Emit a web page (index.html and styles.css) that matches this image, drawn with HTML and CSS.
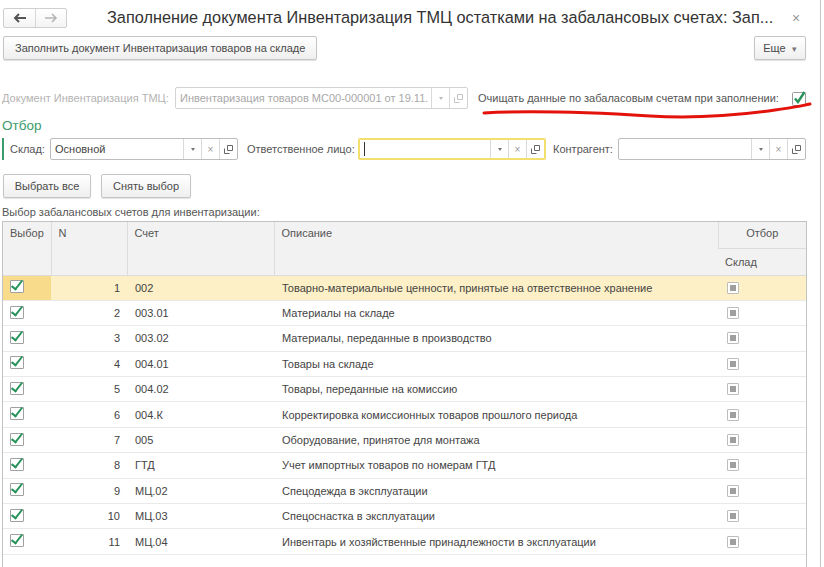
FILE: index.html
```html
<!DOCTYPE html>
<html lang="ru">
<head>
<meta charset="utf-8">
<title>Заполнение документа</title>
<link rel="stylesheet" href="styles.css">
</head>
<body>
<div class="window">
  <div class="titlebar">
    <div class="nav">
      <span class="nav-btn"><svg width="14" height="10" viewBox="0 0 14 10"><path d="M13 5H2M6 1L2 5l4 4" fill="none" stroke="#555" stroke-width="2"/></svg></span>
      <span class="nav-btn"><svg width="14" height="10" viewBox="0 0 14 10"><path d="M1 5h11M8 1l4 4-4 4" fill="none" stroke="#b5b5b5" stroke-width="1.6"/></svg></span>
    </div>
    <div class="title">Заполнение документа Инвентаризация ТМЦ остатками на забалансовых счетах: Зап...</div>
    <div class="close">×</div>
  </div>

  <div class="toolbar">
    <button class="btn">Заполнить документ Инвентаризация товаров на складе</button>
    <button class="btn btn-more">Еще <span class="caret">▾</span></button>
  </div>

  <div class="doc-row">
    <span class="label disabled doc-label">Документ Инвентаризация ТМЦ:</span>
    <div class="field field-doc">
      <span class="field-text disabled-text">Инвентаризация товаров МС00-000001 от 19.11.</span>
      <span class="fbtn"><span class="tri"></span></span>
      <span class="fbtn"><svg width="9" height="9" viewBox="0 0 9 9"><path d="M3.5 0.5h5v5h-5zM0.5 3.5v5h5" fill="none" stroke="#c4c4c4"/></svg></span>
    </div>
    <span class="label clear-label">Очищать данные по забаласовым счетам при заполнении:</span>
    <span class="check"><svg width="16" height="16" viewBox="0 0 16 16"><rect x="1.5" y="2.5" width="13" height="13" rx="1" fill="#fff" stroke="#9a9a9a"/><path d="M4 8.5l3 3.5 6.5-10" fill="none" stroke="#27935a" stroke-width="2.4"/></svg></span>
  </div>

  <div class="section-title">Отбор</div>

  <div class="filter-row">
    <span class="label lbl-sklad">Склад:</span>
    <div class="field">
      <span class="field-text">Основной</span>
      <span class="fbtn"><span class="tri"></span></span>
      <span class="fbtn x">×</span>
      <span class="fbtn"><svg width="9" height="9" viewBox="0 0 9 9"><path d="M3.5 0.5h5v5h-5zM0.5 3.5v5h5" fill="none" stroke="#666"/></svg></span>
    </div>
    <span class="label lbl-resp">Ответственное лицо:</span>
    <div class="field focused">
      <span class="field-text"><span class="cursor"></span></span>
      <span class="fbtn"><span class="tri"></span></span>
      <span class="fbtn x">×</span>
      <span class="fbtn"><svg width="9" height="9" viewBox="0 0 9 9"><path d="M3.5 0.5h5v5h-5zM0.5 3.5v5h5" fill="none" stroke="#666"/></svg></span>
    </div>
    <span class="label lbl-kontr">Контрагент:</span>
    <div class="field">
      <span class="field-text"></span>
      <span class="fbtn"><span class="tri"></span></span>
      <span class="fbtn x">×</span>
      <span class="fbtn"><svg width="9" height="9" viewBox="0 0 9 9"><path d="M3.5 0.5h5v5h-5zM0.5 3.5v5h5" fill="none" stroke="#666"/></svg></span>
    </div>
  </div>

  <div class="btn-row">
    <button class="btn btn-all">Выбрать все</button>
    <button class="btn btn-none">Снять выбор</button>
  </div>

  <div class="table-label">Выбор забалансовых счетов для инвентаризации:</div>

  <div class="grid-wrap">
    <table class="grid">
      <colgroup>
        <col class="c-sel"><col class="c-n"><col class="c-acc"><col class="c-desc"><col class="c-sklad">
      </colgroup>
      <thead>
        <tr class="h1">
          <th rowspan="2">Выбор</th>
          <th rowspan="2">N</th>
          <th rowspan="2">Счет</th>
          <th rowspan="2">Описание</th>
          <th class="center">Отбор</th>
        </tr>
        <tr class="h2">
          <th>Склад</th>
        </tr>
      </thead>
      <tbody>
        <tr class="current"><td class="sel"><span class="cb"></span></td><td class="num">1</td><td>002</td><td>Товарно-материальные ценности, принятые на ответственное хранение</td><td><span class="gcb"></span></td></tr>
        <tr><td class="sel"><span class="cb"></span></td><td class="num">2</td><td>003.01</td><td>Материалы на складе</td><td><span class="gcb"></span></td></tr>
        <tr><td class="sel"><span class="cb"></span></td><td class="num">3</td><td>003.02</td><td>Материалы, переданные в производство</td><td><span class="gcb"></span></td></tr>
        <tr><td class="sel"><span class="cb"></span></td><td class="num">4</td><td>004.01</td><td>Товары на складе</td><td><span class="gcb"></span></td></tr>
        <tr><td class="sel"><span class="cb"></span></td><td class="num">5</td><td>004.02</td><td>Товары, переданные на комиссию</td><td><span class="gcb"></span></td></tr>
        <tr><td class="sel"><span class="cb"></span></td><td class="num">6</td><td>004.К</td><td>Корректировка комиссионных товаров прошлого периода</td><td><span class="gcb"></span></td></tr>
        <tr><td class="sel"><span class="cb"></span></td><td class="num">7</td><td>005</td><td>Оборудование, принятое для монтажа</td><td><span class="gcb"></span></td></tr>
        <tr><td class="sel"><span class="cb"></span></td><td class="num">8</td><td>ГТД</td><td>Учет импортных товаров по номерам ГТД</td><td><span class="gcb"></span></td></tr>
        <tr><td class="sel"><span class="cb"></span></td><td class="num">9</td><td>МЦ.02</td><td>Спецодежда в эксплуатации</td><td><span class="gcb"></span></td></tr>
        <tr><td class="sel"><span class="cb"></span></td><td class="num">10</td><td>МЦ.03</td><td>Спецоснастка в эксплуатации</td><td><span class="gcb"></span></td></tr>
        <tr><td class="sel"><span class="cb"></span></td><td class="num">11</td><td>МЦ.04</td><td>Инвентарь и хозяйственные принадлежности в эксплуатации</td><td><span class="gcb"></span></td></tr>
      </tbody>
    </table>
  </div>

  <svg class="annotation" width="824" height="130" viewBox="0 0 824 130"><path d="M484 113 C 540 110, 600 113, 650 116 S 740 115, 775 110 S 800 106, 810 104" fill="none" stroke="#e3120b" stroke-width="3" stroke-linecap="round"/></svg>
</div>
</body>
</html>
```
FILE: styles.css
```css
* { box-sizing: border-box; }
html, body { margin: 0; padding: 0; }
body {
  font-family: "Liberation Sans", Arial, sans-serif;
  font-size: 11px;
  color: #4a4a4a;
  background: #fff;
  overflow: hidden;
}
.window {
  position: relative;
  width: 821px;
  height: 567px;
  border-right: 1px solid #c6c6c6;
  overflow: hidden;
}
.titlebar {
  display: flex;
  align-items: center;
  height: 35px;
  padding-left: 3px;
}
.nav {
  display: flex;
  height: 20px;
  border: 1px solid #cfcfcf;
  border-radius: 2px;
  background: linear-gradient(#fff, #f4f4f4);
}
.nav-btn {
  width: 31px;
  display: flex;
  align-items: center;
  justify-content: center;
}
.nav-btn + .nav-btn { border-left: 1px solid #d6d6d6; }
.title {
  flex: 1;
  min-width: 0;
  margin-left: 40px;
  font-size: 16.3px;
  color: #333;
  white-space: nowrap;
  overflow: hidden;
}
.close {
  width: 20px;
  margin-right: 14px;
  text-align: center;
  color: #9a9a9a;
  font-size: 14px;
}
.toolbar {
  display: flex;
  justify-content: space-between;
  padding: 1px 14px 0 3px;
}
.btn {
  height: 24px;
  padding: 0 11px;
  border: 1px solid #c5c5c5;
  border-radius: 2px;
  background: linear-gradient(#ffffff, #efefef);
  box-shadow: 0 1px 1px rgba(0,0,0,0.12);
  font-family: inherit;
  font-size: 11px;
  color: #4a4a4a;
  white-space: nowrap;
  cursor: default;
}
.btn-more { padding: 0; width: 52px; }
.caret { font-size: 9px; color: #777; margin-left: 3px; }
.doc-row {
  display: flex;
  align-items: center;
  height: 22px;
  margin-top: 27px;
  padding-left: 2px;
}
.label { white-space: nowrap; color: #555; }
.label.disabled { color: #b3b3b3; }
.doc-label { width: 173px; }
.field {
  display: flex;
  width: 188px;
  height: 22px;
  border: 1px solid #bdbdbd;
  border-radius: 2px;
  background: #fff;
  flex: none;
}
.field-doc { width: 293px; border-color: #d2d2d2; }
.field-text {
  flex: 1;
  min-width: 0;
  display: flex;
  align-items: center;
  padding-left: 4px;
  white-space: nowrap;
  overflow: hidden;
  color: #444;
}
.disabled-text { color: #a8a8a8; }
.fbtn {
  width: 18px;
  display: flex;
  align-items: center;
  justify-content: center;
  border-left: 1px solid #dadada;
  color: #888;
}
.fbtn.x { font-size: 10px; color: #9a9a9a; }
.tri {
  width: 0; height: 0;
  border-left: 2.5px solid transparent;
  border-right: 2.5px solid transparent;
  border-top: 3px solid #777;
}
.field-doc .tri { border-top-color: #bbb; }
.field.focused {
  border: 2px solid #f2df6c;
}
.cursor { display: inline-block; width: 1px; height: 14px; background: #333; }
.clear-label { margin-left: 10px; width: 310px; }
.check { margin-left: 3px; display: flex; }
.section-title {
  margin-top: 8px;
  padding-left: 2px;
  font-size: 13.5px;
  line-height: 17px;
  color: #3c9b6b;
}
.filter-row {
  display: flex;
  align-items: center;
  height: 22px;
  margin-top: 4px;
  margin-left: 2px;
  border-left: 2px solid #3c9b6b;
  padding-left: 6px;
}
.lbl-sklad { width: 40px; }
.lbl-resp { width: 111px; margin-left: 9px; }
.lbl-kontr { width: 65px; margin-left: 7px; }
.btn-row {
  display: flex;
  gap: 10px;
  padding-left: 3px;
  margin-top: 14px;
}
.btn-all { width: 88px; padding: 0; }
.btn-none { width: 90px; padding: 0; }
.table-label {
  margin-top: 6px;
  padding-left: 2px;
  line-height: 16px;
  color: #555;
}
.grid-wrap {
  margin: 1px 0 0 2px;
  width: 805px;
  height: 400px;
  border: 1px solid #c3c3c3;
}
.grid {
  width: 803px;
  border-collapse: collapse;
  table-layout: fixed;
}
.c-sel { width: 48px; }
.c-n { width: 76px; }
.c-acc { width: 147px; }
.c-desc { width: 444px; }
.c-sklad { width: 88px; }
.grid th {
  background: #f2f2f2;
  font-weight: normal;
  text-align: left;
  vertical-align: top;
  color: #555;
  padding: 5px 0 0 7px;
  border-left: 1px solid #dcdcdc;
  border-bottom: 1px solid #dcdcdc;
}
.grid th:first-child { border-left: none; }
.grid .h1 th { height: 26px; }
.grid .h1 th.center { text-align: center; padding-left: 0; }
.grid .h2 th { height: 27px; padding-top: 7px; }
.grid td {
  height: 25.4px;
  padding: 0 0 0 8px;
  border-bottom: 1px solid #e9e9e9;
  white-space: nowrap;
  overflow: hidden;
  color: #444;
}
.grid td.num { text-align: right; padding: 0 7px 0 0; }
.grid td.sel { padding-left: 7px; }
.grid tr.current td { background: #fdf0c6; }
.grid tr.current td.sel { background: #f8dc8b; }
.cb {
  display: block;
  position: relative;
  width: 14px;
  height: 13px;
  margin-top: -2px;
  border: 1px solid #a0a0a0;
  border-radius: 1px;
  background: #fff;
}
.cb::after {
  content: "";
  position: absolute;
  left: 3px;
  top: -3px;
  width: 4px;
  height: 10px;
  border-right: 2.4px solid #27935a;
  border-bottom: 2.4px solid #27935a;
  transform: rotate(38deg);
}
.gcb {
  display: block;
  position: relative;
  width: 12px;
  height: 12px;
  margin-left: 1px;
  border: 1px solid #bdbdbd;
  border-radius: 1px;
  background: #fff;
}
.gcb::after {
  content: "";
  position: absolute;
  left: 2px; top: 2px;
  width: 6px; height: 6px;
  background: #9f9f9f;
}
.annotation {
  position: absolute;
  left: 0;
  top: 0;
  pointer-events: none;
}
```
